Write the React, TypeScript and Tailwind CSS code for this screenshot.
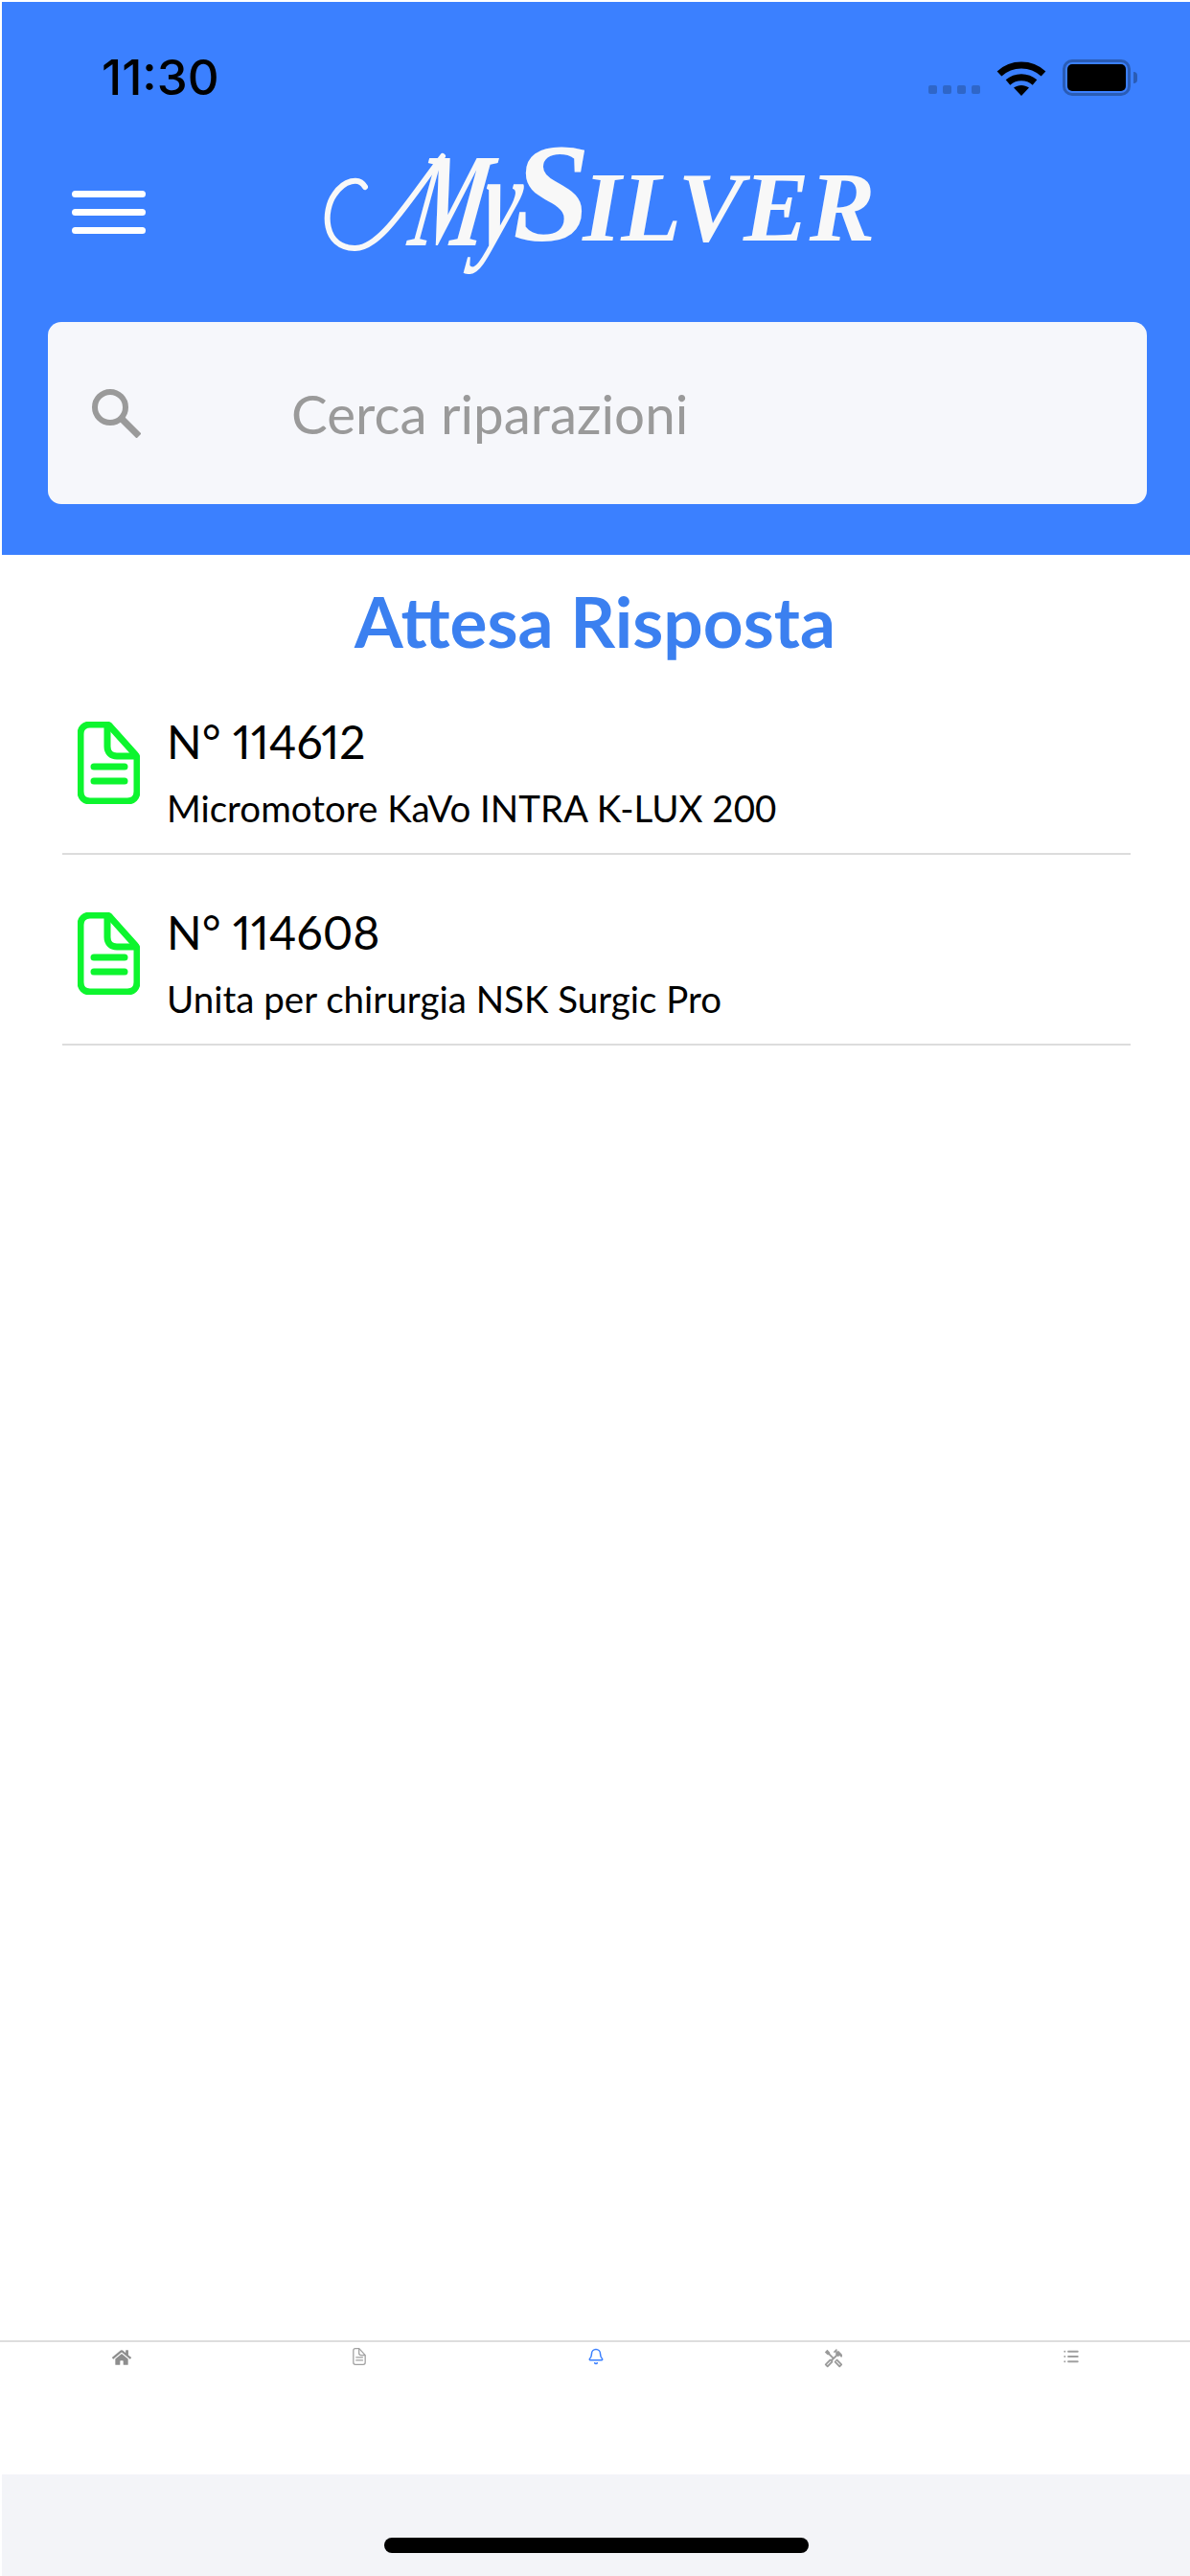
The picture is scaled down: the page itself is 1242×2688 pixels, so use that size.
import { Bell, List } from "lucide-react";
import { FaHome } from "react-icons/fa";
import { MdOutlineHandyman } from "react-icons/md";

function FileIcon({ className, color, sw }: { className: string; color: string; sw: number }) {
  return (
    <svg viewBox="0 0 65 86" fill="none" className={className} stroke={color} strokeWidth={sw} strokeLinecap="round" strokeLinejoin="round">
      <path d="M13 3h17c2 0 3 .7 4 2l26 29c1.400 1.500 2 3 2 5v34c0 6-4 10-10 10H13C7 83 3 79 3 73V13C3 7 7 3 13 3z" />
      <path d="M31 4v22c0 6 4 10 10 10h20" />
      <path d="M17 47h32M17 62h32" />
    </svg>
  );
}

function Wifi() {
  return (
    <svg viewBox="0 0 52 38" className="w-[52px] h-[38px]" fill="none" stroke="#000">
      <path d="M3 15C16 3 36 3 49 15" strokeWidth="7" />
      <path d="M12 24c8-7 20-7 28 0" strokeWidth="7" />
      <path d="M18 29.500c5-3.500 11-3.500 16 0L26 38z" fill="#000" stroke="none" />
    </svg>
  );
}

function Battery() {
  return (
    <div className="flex items-center gap-[3px]">
      <div className="w-[71px] h-[38px] rounded-[10px] border-[3px] border-[#2a5cb5] p-[2px]">
        <div className="w-full h-full bg-black rounded-[5px]" />
      </div>
      <div className="w-[4px] h-[12px] rounded-r-full bg-[#2a5cb5]" />
    </div>
  );
}

function Logo() {
  return (
    <div className="relative w-[575px] h-[145px] font-['Liberation_Serif',serif] italic text-[#f8f8f8] select-none">
      <svg viewBox="0 0 140 130" className="absolute left-0 top-[6px] w-[140px] h-[130px]" fill="none" stroke="#f8f8f8" strokeLinecap="round">
        <path d="M44 47C38 36 22 40 12 55C0 72 0 110 33 111C60 112 90 60 125 15" strokeWidth="6" />
      </svg>
      <div className="flex items-baseline whitespace-nowrap pl-[84px] leading-none">
        <span className="inline-block text-[124px] leading-[120px] font-bold w-[114px] tracking-[-9px] origin-bottom-left scale-x-[0.72] scale-y-[1.12] -skew-x-[14deg] translate-y-[7px]">My</span>
        <span className="text-[146px] font-bold leading-[120px]">S</span>
        <span className="text-[103px] font-bold leading-[120px] -ml-[8px]">ILVER</span>
      </div>
    </div>
  );
}

function Repair({ num, name }: { num: string; name: string }) {
  return (
    <div className="h-[199px] ml-[65px] mr-[62px] border-b-2 border-[#dcdcdc] flex items-start pl-[16px] pt-[60px] box-border">
      <FileIcon className="w-[65px] h-[86px] shrink-0" color="#0df52e" sw={7} />
      <div className="ml-[28px]">
        <div className="text-[48px] leading-[50px] text-black -mt-[4px] proportional-nums">{num}</div>
        <div className="text-[38.500px] leading-[46px] text-black mt-[21px]">{name}</div>
      </div>
    </div>
  );
}

export default function App() {
  return (
    <div className="w-[1242px] h-[2688px] flex flex-col bg-white font-['Lato',sans-serif] overflow-hidden">
      <header className="bg-[#3b80ff] h-[577px] mt-[2px] ml-[2px] shrink-0 flex flex-col">
        <div className="h-[140px] flex justify-between pt-[55px] pl-[104px] pr-[55px]">
          <span className="font-['Inter',sans-serif] font-medium text-[51px] leading-[48px] text-black">11:30</span>
          <div className="flex items-start gap-[17px] pt-[5px]">
            <div className="flex gap-[6px] mt-[27px]">
              <div className="w-[9px] h-[9px] rounded-[2px] bg-[#2f66c8]" />
              <div className="w-[9px] h-[9px] rounded-[2px] bg-[#2f66c8]" />
              <div className="w-[9px] h-[9px] rounded-[2px] bg-[#2f66c8]" />
              <div className="w-[9px] h-[9px] rounded-[2px] bg-[#2f66c8]" />
            </div>
            <Wifi />
            <Battery />
          </div>
        </div>
        <div className="h-[194px] flex items-start pl-[73px]">
          <div className="flex flex-col gap-[12px] mt-[57px] w-[77px]">
            <div className="h-[7px] rounded-full bg-white" />
            <div className="h-[7px] rounded-full bg-white" />
            <div className="h-[7px] rounded-full bg-white" />
          </div>
          <div className="ml-[185px]">
            <Logo />
          </div>
        </div>
        <div className="ml-[48px] mr-[45px] h-[190px] bg-[#f6f7fb] rounded-[14px] flex items-center pl-[45px]">
          <svg viewBox="0 0 52 52" className="w-[52px] h-[52px] shrink-0" fill="none" stroke="#9a9a9a" strokeWidth="6">
            <circle cx="20" cy="20" r="16" />
            <path d="M31 31l19 19" strokeWidth="7" />
          </svg>
          <span className="ml-[157px] text-[56.500px] text-[#9a9a9a]">Cerca riparazioni</span>
        </div>
      </header>

      <main className="flex-1">
        <h1 className="text-center text-[73px] leading-[80px] font-bold text-[#3b80f0] mt-[29px]">Attesa Risposta</h1>
        <div className="mt-[5px]">
          <Repair num="N° 114612" name="Micromotore KaVo INTRA K-LUX 200" />
          <Repair num="N° 114608" name="Unita per chirurgia NSK Surgic Pro" />
        </div>
      </main>

      <nav className="h-[140px] border-t-2 border-[#dedede] grid grid-cols-5 shrink-0 pt-[6px] pl-[3px]">
        <div className="flex justify-center"><FaHome className="w-[20px] h-[20px] text-[#8e8e8e]" /></div>
        <div className="flex justify-center"><FileIcon className="w-[14px] h-[18px]" color="#a0a0a0" sw={6} /></div>
        <div className="flex justify-center"><Bell className="w-[18px] h-[18px] text-[#3b80ff]" strokeWidth={2} /></div>
        <div className="flex justify-center"><MdOutlineHandyman className="w-[22px] h-[22px] text-[#9a9a9a]" /></div>
        <div className="flex justify-center"><List className="w-[18px] h-[18px] text-[#a0a0a0]" strokeWidth={2.5} /></div>
      </nav>

      <div className="h-[106px] bg-[#f3f4f8] ml-[2px] shrink-0 flex justify-center pt-[66px]">
        <div className="w-[443px] h-[16px] rounded-full bg-black" />
      </div>
    </div>
  );
}
